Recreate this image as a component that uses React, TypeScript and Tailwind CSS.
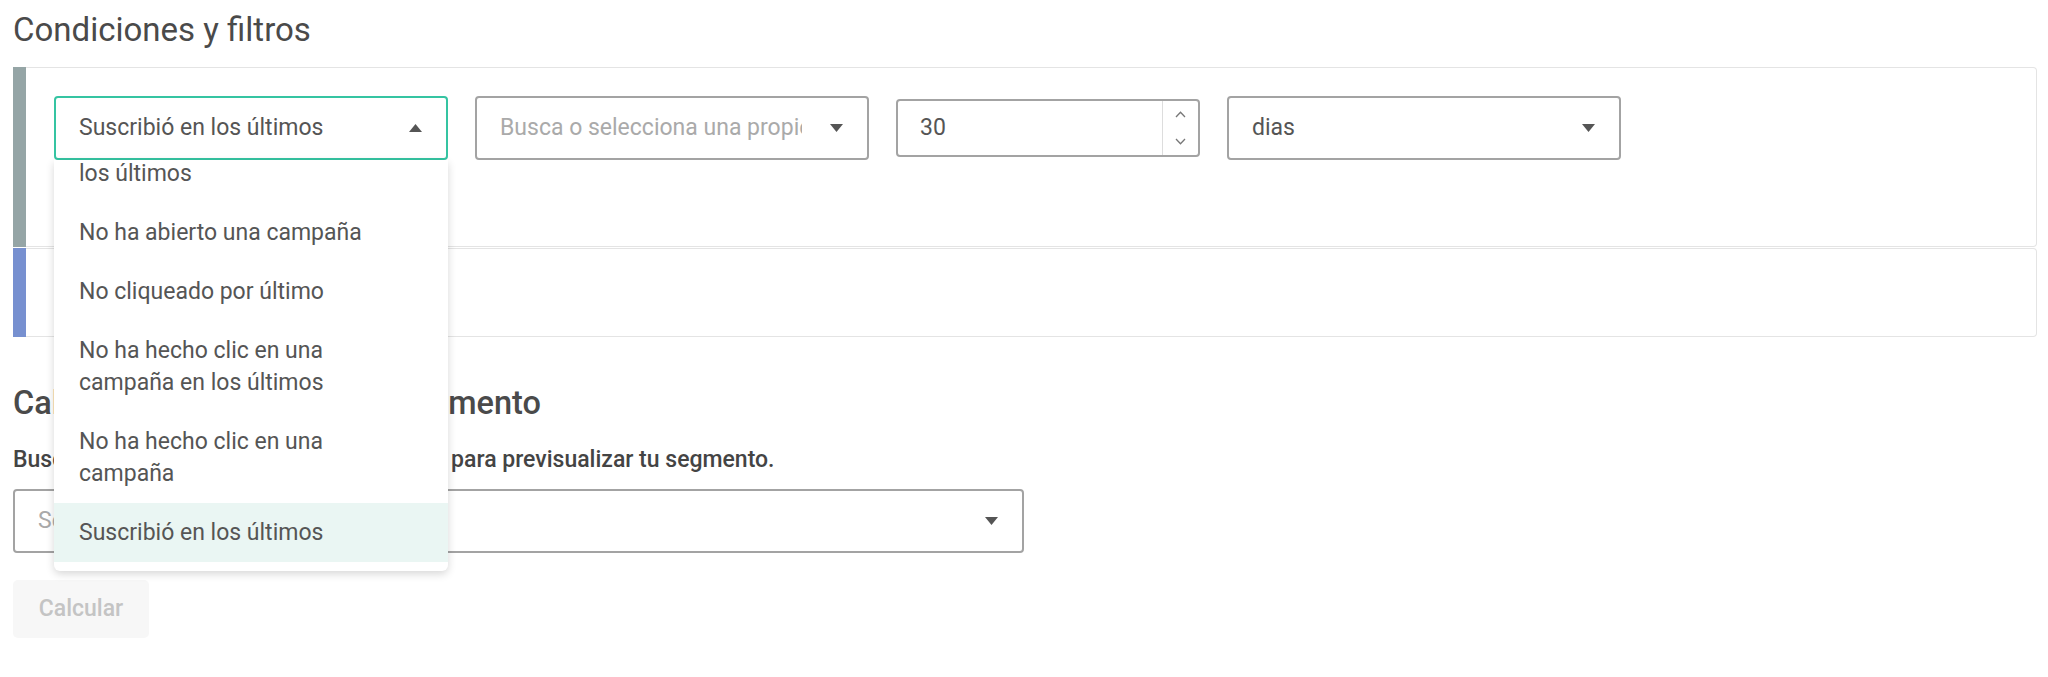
import React from 'react';

const Caret = ({ up = false }: { up?: boolean }) => (
  <svg width="13" height="8" viewBox="0 0 13 8" className="shrink-0">
    {up ? <polygon points="0,8 13,8 6.5,0" fill="#555" /> : <polygon points="0,0 13,0 6.5,8" fill="#555" />}
  </svg>
);

const Select = ({
  value,
  placeholder,
  width,
  active = false,
  children,
}: {
  value?: string;
  placeholder?: string;
  width: string;
  active?: boolean;
  children?: React.ReactNode;
}) => (
  <div className={`relative ${width}`}>
    <div
      className={`flex h-[64px] items-center rounded-[4px] border-2 bg-white pl-[23px] pr-[24px] ${
        active ? 'border-[#35c4a2]' : 'border-[#a3a3a3]'
      }`}
    >
      <div className="mr-[28px] min-w-0 flex-1 overflow-hidden whitespace-nowrap">
        {value ? (
          <span className="text-[#555]">{value}</span>
        ) : (
          <span className="text-[#aaa]">{placeholder}</span>
        )}
      </div>
      <Caret up={active} />
    </div>
    {children}
  </div>
);

const menuItems = [
  'No ha abierto una campaña en los últimos',
  'No ha abierto una campaña',
  'No cliqueado por último',
  'No ha hecho clic en una campaña en los últimos',
  'No ha hecho clic en una campaña',
  'Suscribió en los últimos',
];

// list is scrolled to the bottom, the first option is cut off at the top
const Menu = () => (
  <div className="absolute left-0 top-full z-10 flex h-[411px] w-full flex-col justify-end overflow-hidden rounded-b-[6px] bg-white pb-[9px] shadow-[0_3px_8px_rgba(0,0,0,0.16)]">
    {menuItems.map((item, i) => (
      <div
        key={item}
        className={`shrink-0 py-[13.5px] pl-[25px] pr-[40px] text-[#555] ${
          i === menuItems.length - 1 ? 'bg-[#eaf6f3]' : ''
        }`}
      >
        {item}
      </div>
    ))}
  </div>
);

const NumberInput = () => (
  <div className="flex h-[58px] w-[304px] rounded-[4px] border-2 border-[#a3a3a3] bg-white">
    <div className="flex flex-1 items-center pl-[22px] text-[#555]">30</div>
    <div className="flex w-[36px] flex-col items-center justify-between border-l border-[#ddd] py-[10px]">
      <svg width="11" height="7" viewBox="0 0 11 7">
        <polyline points="1,6 5.5,1.2 10,6" fill="none" stroke="#777" strokeWidth="1.3" />
      </svg>
      <svg width="11" height="7" viewBox="0 0 11 7">
        <polyline points="1,1 5.5,5.8 10,1" fill="none" stroke="#777" strokeWidth="1.3" />
      </svg>
    </div>
  </div>
);

export default function App() {
  return (
    <div className="min-h-[677px] bg-white pl-[13px] pr-[11px] pt-[11px] font-['Roboto',sans-serif] text-[23px] leading-[32px] text-[#555]">
      <h2 className="mb-[18px] text-[33px] leading-[38px] font-normal text-[#4a4a4a]">Condiciones y filtros</h2>

      <div className="flex flex-col gap-px">
        <div className="flex h-[180px]">
          <div className="w-[13px] shrink-0 bg-[#95a5a6]" />
          <div className="flex flex-1 items-start gap-[27px] rounded-r-[4px] border border-l-0 border-[#e4e4e4] pl-[28px] pt-[28px]">
            <Select value="Suscribió en los últimos" width="w-[394px]" active>
              <Menu />
            </Select>
            <Select placeholder="Busca o selecciona una propiedad" width="w-[394px]" />
            <div className="flex h-[64px] items-center">
              <NumberInput />
            </div>
            <Select value="dias" width="w-[394px]" />
          </div>
        </div>
        <div className="flex h-[89px]">
          <div className="w-[13px] shrink-0 bg-[#7790d0]" />
          <div className="flex-1 rounded-r-[4px] border border-l-0 border-[#e4e4e4]" />
        </div>
      </div>

      <h2 className="mt-[47px] text-[32.5px] leading-[38px] font-medium text-[#4a4a4a]">Calcula el tamaño de este segmento</h2>
      <p className="mt-[22px] font-medium text-[#444]">
        Busca o selecciona un contacto de tu lista para previsualizar tu segmento.
      </p>

      <div className="mt-[13px]">
        <Select placeholder="Selecciona un contacto" width="w-[1011px]" />
      </div>

      <button className="mt-[27px] h-[58px] w-[136px] rounded-[5px] bg-[#f7f7f7] font-medium text-[#c4c4c4]">
        Calcular
      </button>
    </div>
  );
}
